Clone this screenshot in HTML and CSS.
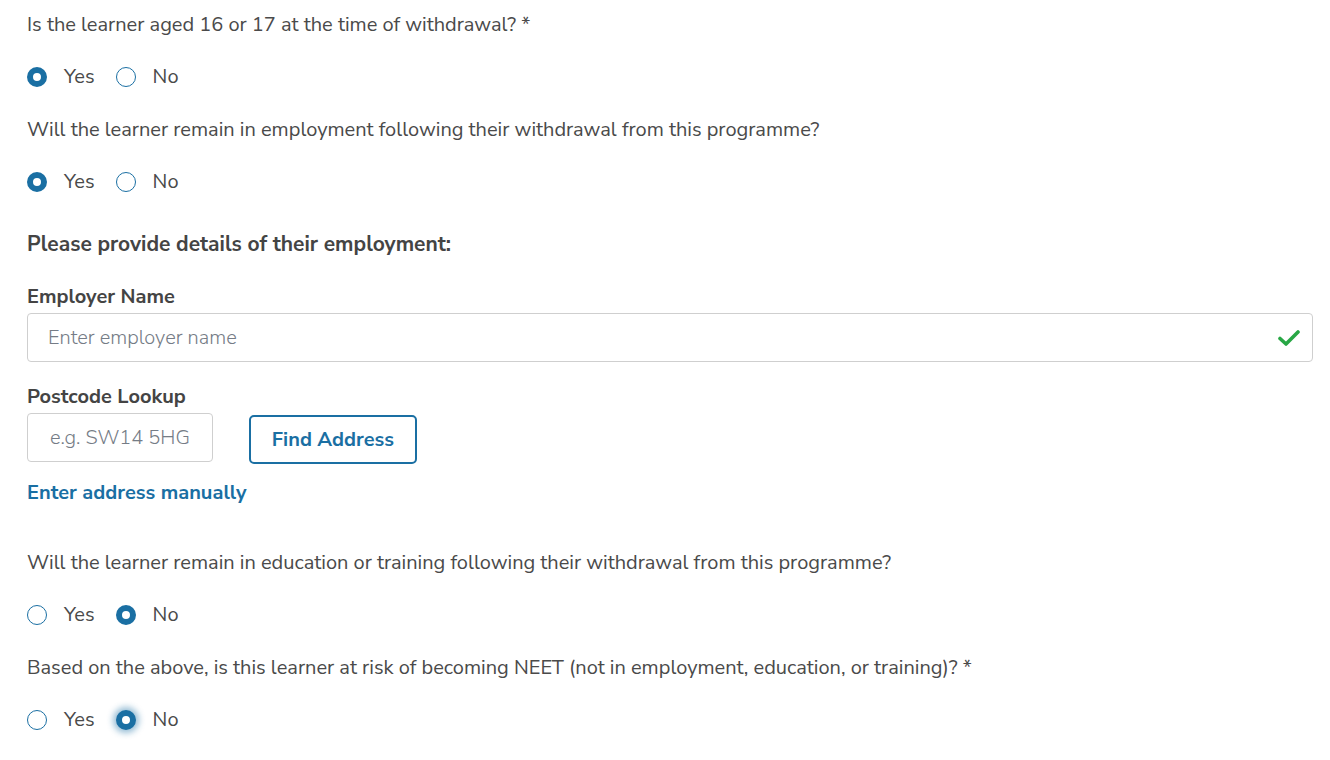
FILE: index.html
```html
<!DOCTYPE html>
<html lang="en">
<head>
  <meta charset="UTF-8" />
  <title>Withdrawal details</title>
  <link rel="stylesheet" href="styles.css">
</head>
<body>
  <form class="form">
    <!-- Age question -->
    <div class="question">
      <p class="question-text">Is the learner aged 16 or 17 at the time of withdrawal? *</p>
      <div class="radio-row">
        <label class="radio"><span class="radio-dot checked"></span>Yes</label>
        <label class="radio"><span class="radio-dot"></span>No</label>
      </div>
    </div>

    <div class="question">
      <p class="question-text">Will the learner remain in employment following their withdrawal from this programme?</p>
      <div class="radio-row">
        <label class="radio"><span class="radio-dot checked"></span>Yes</label>
        <label class="radio"><span class="radio-dot"></span>No</label>
      </div>
    </div>

    <!-- Employment details -->
    <h2 class="section-title">Please provide details of their employment:</h2>

    <label class="field-label">Employer Name</label>
    <div class="input-wrap">
      <div class="text-input">Enter employer name</div>
      <svg class="valid-icon" width="22" height="18" viewBox="0 0 22 18">
        <path d="M2 9.5 L8 15 L20 3" fill="none" stroke="#28a745" stroke-width="3.6" stroke-linecap="round" stroke-linejoin="round"/>
      </svg>
    </div>

    <label class="field-label postcode-label">Postcode Lookup</label>
    <div class="postcode-row">
      <div class="text-input postcode-input">e.g. SW14 5HG</div>
      <button type="button" class="find-btn">Find Address</button>
    </div>
    <a class="manual-link">Enter address manually</a>

    <!-- Education -->
    <div class="question education">
      <p class="question-text">Will the learner remain in education or training following their withdrawal from this programme?</p>
      <div class="radio-row">
        <label class="radio"><span class="radio-dot"></span>Yes</label>
        <label class="radio"><span class="radio-dot checked"></span>No</label>
      </div>
    </div>

    <div class="question">
      <p class="question-text">Based on the above, is this learner at risk of becoming NEET (not in employment, education, or training)? *</p>
      <div class="radio-row">
        <label class="radio"><span class="radio-dot"></span>Yes</label>
        <label class="radio"><span class="radio-dot checked focused"></span>No</label>
      </div>
    </div>
  </form>
</body>
</html>
```

FILE: styles.css
```css
body {
  margin: 0;
  background: #fff;
  color: #4a4a4a;
  font-family: 'Nunito Sans', 'Open Sans', Lato, sans-serif;
  font-size: 20px;
  line-height: 30px;
}

.form {
  width: 1286px;
  padding: 10px 0 0 27px;
}

.question {
  margin-bottom: 23px;
}

.question-text {
  margin: 0 0 22px 0;
}

.radio-row {
  display: flex;
  align-items: center;
  height: 30px;
}

.radio {
  display: flex;
  align-items: center;
  margin-right: 21px;
}

.radio-dot {
  box-sizing: border-box;
  width: 20px;
  height: 20px;
  border-radius: 50%;
  border: 1.5px solid #1a6fa3;
  margin-right: 17px;
}

.radio-dot.checked {
  border: 6.5px solid #1a6fa3;
  background: #fff;
}

.radio-dot.focused {
  box-shadow: 0 0 6px 3px rgba(26, 111, 163, 0.45);
}

.section-title {
  margin: 32px 0 23px 0;
  font-size: 21px;
  line-height: 30px;
  font-weight: 700;
  color: #444;
}

.field-label {
  display: block;
  font-weight: 700;
  color: #444;
  margin-bottom: 1px;
}

.postcode-label {
  margin-top: 20px;
}

.input-wrap {
  position: relative;
}

.text-input {
  box-sizing: border-box;
  height: 49px;
  border: 1px solid #cfcfcf;
  border-radius: 4px;
  padding: 9px 20px;
  color: #757c86;
  font-weight: 300;
}

.valid-icon {
  position: absolute;
  right: 13px;
  top: 16px;
}

.postcode-row {
  display: flex;
  align-items: flex-start;
  gap: 36px;
}

.postcode-input {
  width: 186px;
  padding: 9px 0;
  text-align: center;
}

.find-btn {
  box-sizing: border-box;
  margin-top: 2px;
  height: 49px;
  width: 168px;
  background: #fff;
  border: 2px solid #1a6fa3;
  border-radius: 5px;
  color: #1a6fa3;
  font-family: inherit;
  font-size: 20px;
  font-weight: 700;
  cursor: pointer;
}

.manual-link {
  display: inline-block;
  margin-top: 14px;
  color: #1a6fa3;
  font-weight: 700;
  cursor: pointer;
}

.education {
  margin-top: 40px;
}
```
